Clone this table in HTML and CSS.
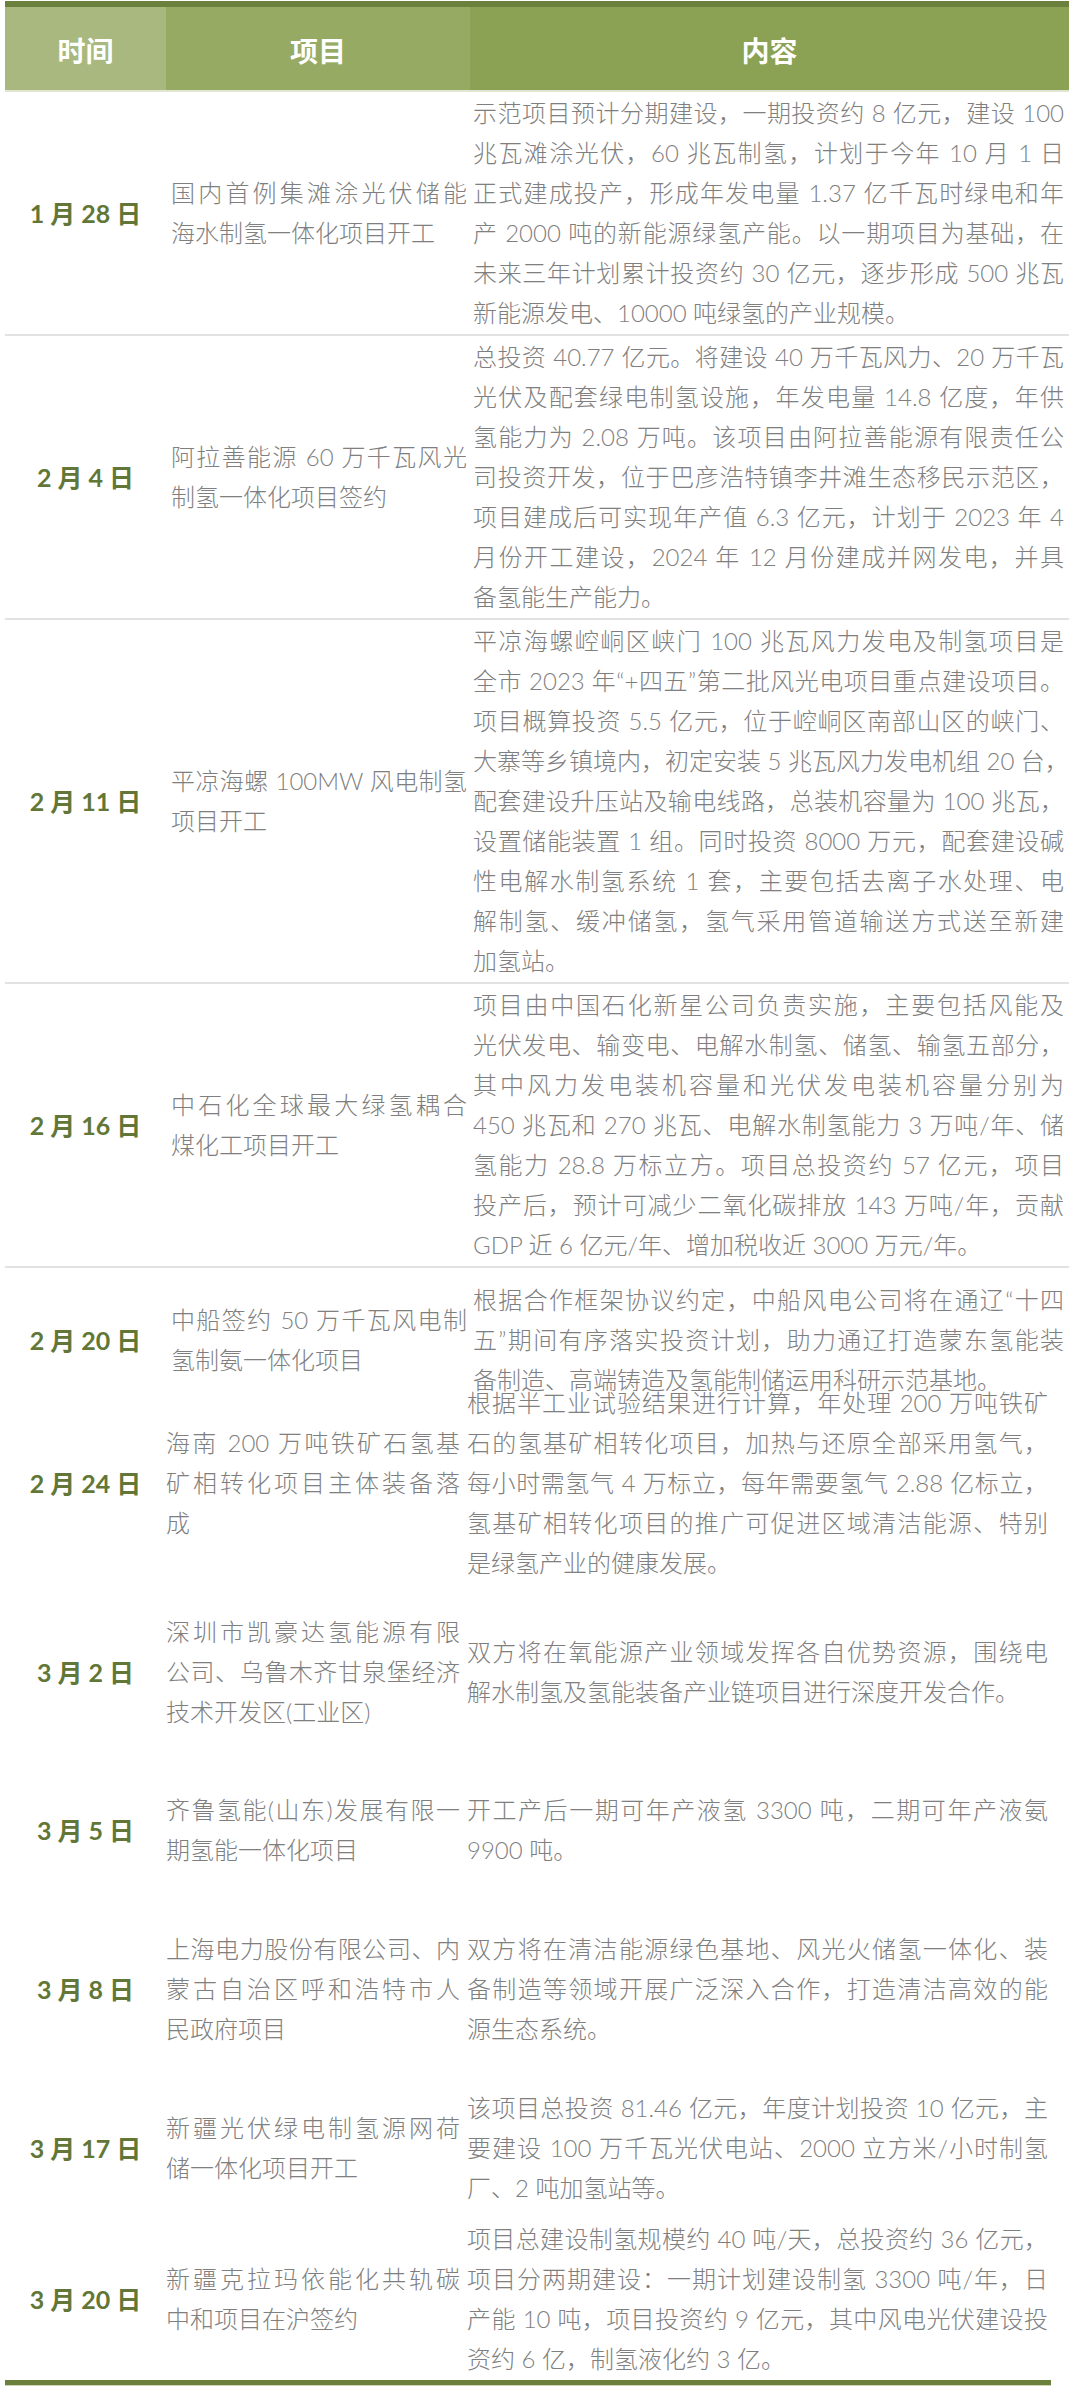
FILE: index.html
```html
<!DOCTYPE html>
<html lang="zh-CN">
<head>
<meta charset="utf-8">
<title>氢能项目进展</title>
<link rel="stylesheet" href="styles.css">
</head>
<body>
<div class="sheet">
  <div class="head">
    <div class="h h1">时间</div>
    <div class="h h2">项目</div>
    <div class="h h3">内容</div>
  </div>

  <div class="row ruled">
    <div class="cell date">1 月 28 日</div>
    <div class="cell proj">
      <span class="ln j">国内首例集滩涂光伏储能</span>
      <span class="ln">海水制氢一体化项目开工</span>
    </div>
    <div class="cell text">
      <span class="ln j">示范项目预计分期建设，一期投资约 8 亿元，建设 100</span>
      <span class="ln j">兆瓦滩涂光伏，60 兆瓦制氢，计划于今年 10 月 1 日</span>
      <span class="ln j">正式建成投产，形成年发电量 1.37 亿千瓦时绿电和年</span>
      <span class="ln j">产 2000 吨的新能源绿氢产能。以一期项目为基础，在</span>
      <span class="ln j">未来三年计划累计投资约 30 亿元，逐步形成 500 兆瓦</span>
      <span class="ln">新能源发电、10000 吨绿氢的产业规模。</span>
    </div>
  </div>

  <div class="row ruled">
    <div class="cell date">2 月 4 日</div>
    <div class="cell proj">
      <span class="ln j">阿拉善能源 60 万千瓦风光</span>
      <span class="ln">制氢一体化项目签约</span>
    </div>
    <div class="cell text">
      <span class="ln j">总投资 40.77 亿元。将建设 40 万千瓦风力、20 万千瓦</span>
      <span class="ln j">光伏及配套绿电制氢设施，年发电量 14.8 亿度，年供</span>
      <span class="ln j">氢能力为 2.08 万吨。该项目由阿拉善能源有限责任公</span>
      <span class="ln j">司投资开发，位于巴彦浩特镇李井滩生态移民示范区，</span>
      <span class="ln j">项目建成后可实现年产值 6.3 亿元，计划于 2023 年 4</span>
      <span class="ln j">月份开工建设，2024 年 12 月份建成并网发电，并具</span>
      <span class="ln">备氢能生产能力。</span>
    </div>
  </div>

  <div class="row ruled">
    <div class="cell date">2 月 11 日</div>
    <div class="cell proj">
      <span class="ln j">平凉海螺 100MW 风电制氢</span>
      <span class="ln">项目开工</span>
    </div>
    <div class="cell text">
      <span class="ln j">平凉海螺崆峒区峡门 100 兆瓦风力发电及制氢项目是</span>
      <span class="ln j">全市 2023 年“+四五”第二批风光电项目重点建设项目。</span>
      <span class="ln j">项目概算投资 5.5 亿元，位于崆峒区南部山区的峡门、</span>
      <span class="ln j">大寨等乡镇境内，初定安装 5 兆瓦风力发电机组 20 台，</span>
      <span class="ln j">配套建设升压站及输电线路，总装机容量为 100 兆瓦，</span>
      <span class="ln j">设置储能装置 1 组。同时投资 8000 万元，配套建设碱</span>
      <span class="ln j">性电解水制氢系统 1 套，主要包括去离子水处理、电</span>
      <span class="ln j">解制氢、缓冲储氢，氢气采用管道输送方式送至新建</span>
      <span class="ln">加氢站。</span>
    </div>
  </div>

  <div class="row ruled">
    <div class="cell date">2 月 16 日</div>
    <div class="cell proj">
      <span class="ln j">中石化全球最大绿氢耦合</span>
      <span class="ln">煤化工项目开工</span>
    </div>
    <div class="cell text">
      <span class="ln j">项目由中国石化新星公司负责实施，主要包括风能及</span>
      <span class="ln j">光伏发电、输变电、电解水制氢、储氢、输氢五部分，</span>
      <span class="ln j">其中风力发电装机容量和光伏发电装机容量分别为</span>
      <span class="ln j">450 兆瓦和 270 兆瓦、电解水制氢能力 3 万吨/年、储</span>
      <span class="ln j">氢能力 28.8 万标立方。项目总投资约 57 亿元，项目</span>
      <span class="ln j">投产后，预计可减少二氧化碳排放 143 万吨/年，贡献</span>
      <span class="ln">GDP 近 6 亿元/年、增加税收近 3000 万元/年。</span>
    </div>
  </div>

  <div class="row r5">
    <div class="cell date">2 月 20 日</div>
    <div class="cell proj">
      <span class="ln j">中船签约 50 万千瓦风电制</span>
      <span class="ln">氢制氨一体化项目</span>
    </div>
    <div class="cell text">
      <span class="ln j">根据合作框架协议约定，中船风电公司将在通辽“十四</span>
      <span class="ln j">五”期间有序落实投资计划，助力通辽打造蒙东氢能装</span>
      <span class="ln">备制造、高端铸造及氢能制储运用科研示范基地。</span>
    </div>
  </div>

  <div class="row alt">
    <div class="cell date">2 月 24 日</div>
    <div class="cell proj">
      <span class="ln j">海南 200 万吨铁矿石氢基</span>
      <span class="ln j">矿相转化项目主体装备落</span>
      <span class="ln">成</span>
    </div>
    <div class="cell text">
      <span class="ln j">根据半工业试验结果进行计算，年处理 200 万吨铁矿</span>
      <span class="ln j">石的氢基矿相转化项目，加热与还原全部采用氢气，</span>
      <span class="ln j">每小时需氢气 4 万标立，每年需要氢气 2.88 亿标立，</span>
      <span class="ln j">氢基矿相转化项目的推广可促进区域清洁能源、特别</span>
      <span class="ln">是绿氢产业的健康发展。</span>
    </div>
  </div>

  <div class="row alt tall">
    <div class="cell date">3 月 2 日</div>
    <div class="cell proj">
      <span class="ln j">深圳市凯豪达氢能源有限</span>
      <span class="ln j">公司、乌鲁木齐甘泉堡经济</span>
      <span class="ln">技术开发区(工业区)</span>
    </div>
    <div class="cell text">
      <span class="ln j">双方将在氧能源产业领域发挥各自优势资源，围绕电</span>
      <span class="ln">解水制氢及氢能装备产业链项目进行深度开发合作。</span>
    </div>
  </div>

  <div class="row alt short">
    <div class="cell date">3 月 5 日</div>
    <div class="cell proj">
      <span class="ln j">齐鲁氢能(山东)发展有限一</span>
      <span class="ln">期氢能一体化项目</span>
    </div>
    <div class="cell text">
      <span class="ln j">开工产后一期可年产液氢 3300 吨，二期可年产液氨</span>
      <span class="ln">9900 吨。</span>
    </div>
  </div>

  <div class="row alt taller">
    <div class="cell date">3 月 8 日</div>
    <div class="cell proj">
      <span class="ln j">上海电力股份有限公司、内</span>
      <span class="ln j">蒙古自治区呼和浩特市人</span>
      <span class="ln">民政府项目</span>
    </div>
    <div class="cell text">
      <span class="ln j">双方将在清洁能源绿色基地、风光火储氢一体化、装</span>
      <span class="ln j">备制造等领域开展广泛深入合作，打造清洁高效的能</span>
      <span class="ln">源生态系统。</span>
    </div>
  </div>

  <div class="row alt short">
    <div class="cell date">3 月 17 日</div>
    <div class="cell proj">
      <span class="ln j">新疆光伏绿电制氢源网荷</span>
      <span class="ln">储一体化项目开工</span>
    </div>
    <div class="cell text">
      <span class="ln j">该项目总投资 81.46 亿元，年度计划投资 10 亿元，主</span>
      <span class="ln j">要建设 100 万千瓦光伏电站、2000 立方米/小时制氢</span>
      <span class="ln">厂、2 吨加氢站等。</span>
    </div>
  </div>

  <div class="row alt last">
    <div class="cell date">3 月 20 日</div>
    <div class="cell proj">
      <span class="ln j">新疆克拉玛依能化共轨碳</span>
      <span class="ln">中和项目在沪签约</span>
    </div>
    <div class="cell text">
      <span class="ln j">项目总建设制氢规模约 40 吨/天，总投资约 36 亿元，</span>
      <span class="ln j">项目分两期建设：一期计划建设制氢 3300 吨/年，日</span>
      <span class="ln j">产能 10 吨，项目投资约 9 亿元，其中风电光伏建设投</span>
      <span class="ln">资约 6 亿，制氢液化约 3 亿。</span>
    </div>
  </div>

  <div class="foot"></div>
</div>
</body>
</html>
```

FILE: styles.css
```css
html, body {
  margin: 0;
  padding: 0;
  background: #ffffff;
}

.sheet {
  width: 1064px;
  margin: 1px 0 0 5px;
  font-family: Lato, "Noto Sans CJK SC", sans-serif;
  font-size: 24px;
  line-height: 40px;
  font-weight: 300;
  color: #7f7f7f;
}

/* header */
.head {
  display: grid;
  grid-template-columns: 161px 304px 599px;
  height: 83px;
  border-top: 6px solid #6b803c;
  border-bottom: 2px solid #e0e6d1;
}

.h {
  display: flex;
  align-items: center;
  justify-content: center;
  color: #ffffff;
  font-family: "Noto Sans CJK SC", sans-serif;
  font-weight: 700;
  font-size: 28px;
  padding-top: 2px;
}

.h1 { background: #a8b87f; }
.h2 { background: #97aa64; }
.h3 { background: #8ba153; }

/* rows */
.row {
  display: grid;
  grid-template-columns: 161px 304px 599px;
}

.ruled {
  padding: 1px 0;
  border-bottom: 2px solid #e2e2e2;
}

.cell {
  display: flex;
  flex-direction: column;
  justify-content: center;
}

.date {
  align-items: center;
  font-weight: 700;
  font-size: 25px;
  color: #627737;
  white-space: nowrap;
}

.proj {
  padding: 0 3px 0 5px;
}

.text {
  padding: 0 5px 0 3px;
}

.ln {
  display: block;
  white-space: nowrap;
  text-align: left;
}

.j {
  text-align: justify;
  text-align-last: justify;
}

/* the 2月20日 row is squeezed: its content runs into the next row */
.r5 {
  box-sizing: border-box;
  height: 115px;
  padding-top: 12px;
}

/* rows from 2月24日 on: no rules, shifted text columns */
.alt {
  grid-template-columns: 161px 300px 603px;
}

.alt .proj {
  padding: 0 6px 0 0;
}

.alt .text {
  padding: 0 21px 0 1px;
}

.tall   { height: 178px; }
.short  { height: 138px; }
.taller { height: 180px; }
.last   { height: 163px; }

.foot {
  width: 1046px;
  height: 5px;
  background: #6b803c;
  border-bottom: 1px solid #cdd6b5;
}
```
